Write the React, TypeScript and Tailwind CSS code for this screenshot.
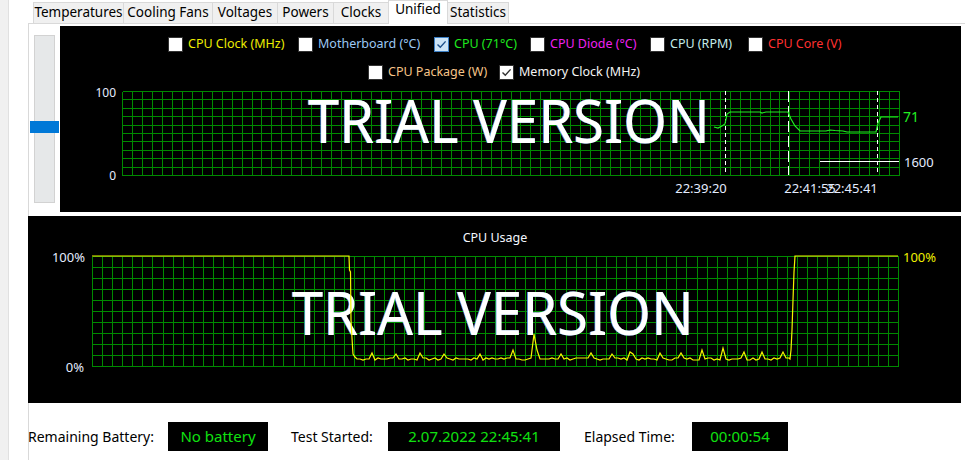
import React from "react";

type CbState = "off" | "blue" | "gray";

function CheckBox({ state }: { state: CbState }) {
  if (state === "blue") {
    return (
      <span className="w-[15px] h-[15px] shrink-0 border border-[#3c7fc4] bg-[#cce4f7] flex items-center justify-center">
        <svg width="11" height="11" viewBox="0 0 11 11">
          <path d="M1.5 5.5 L4.3 8.3 L9.6 2.4" fill="none" stroke="#1d4f8a" strokeWidth="1.4" />
        </svg>
      </span>
    );
  }
  if (state === "gray") {
    return (
      <span className="w-[15px] h-[15px] shrink-0 border border-[#333333] bg-white flex items-center justify-center">
        <svg width="11" height="11" viewBox="0 0 11 11">
          <path d="M1.5 5.5 L4.3 8.3 L9.6 2.4" fill="none" stroke="#333333" strokeWidth="1.4" />
        </svg>
      </span>
    );
  }
  return <span className="w-[15px] h-[15px] shrink-0 border border-[#333333] bg-white" />;
}

const row1 = [
  { label: "CPU Clock (MHz)", color: "text-[#eded00]", w: "w-[130px]", state: "off" as CbState },
  { label: "Motherboard (°C)", color: "text-[#9cc8f4]", w: "w-[136px]", state: "off" as CbState },
  { label: "CPU (71°C)", color: "text-[#1ee81e]", w: "w-[96px]", state: "blue" as CbState },
  { label: "CPU Diode (°C)", color: "text-[#f020f0]", w: "w-[120px]", state: "off" as CbState },
  { label: "CPU (RPM)", color: "text-[#c6ecea]", w: "w-[98px]", state: "off" as CbState },
  { label: "CPU Core (V)", color: "text-[#ff3030]", w: "w-[92px]", state: "off" as CbState },
];
const row2 = [
  { label: "CPU Package (W)", color: "text-[#f6c488]", w: "w-[131px]", state: "off" as CbState },
  { label: "Memory Clock (MHz)", color: "text-[#f4f4f4]", w: "w-[142px]", state: "gray" as CbState },
];

function Legend({ items, pl }: { items: typeof row1; pl: string }) {
  return (
    <div className={`flex h-[15px] items-center ${pl}`}>
      {items.map((it) => (
        <div key={it.label} className={`flex items-center gap-[5px] ${it.w}`}>
          <CheckBox state={it.state} />
          <span className={`text-[12.5px] leading-none whitespace-nowrap ${it.color}`}>{it.label}</span>
        </div>
      ))}
    </div>
  );
}

function Grid({ x0, x1, y0, y1, cols, rows }: { x0: number; x1: number; y0: number; y1: number; cols: number; rows: number }) {
  const v = Array.from({ length: cols + 1 }, (_, i) => Math.round(x0 + (i * (x1 - x0)) / cols) + 0.5);
  const h = Array.from({ length: rows + 1 }, (_, j) => Math.round(y0 + (j * (y1 - y0)) / rows) + 0.5);
  return (
    <g stroke="#008a00" strokeWidth="1" shapeRendering="crispEdges">
      {v.map((x) => (
        <line key={"v" + x} x1={x} y1={h[0]} x2={x} y2={h[h.length - 1]} />
      ))}
      {h.map((y) => (
        <line key={"h" + y} x1={v[0]} y1={y} x2={v[v.length - 1]} y2={y} />
      ))}
    </g>
  );
}

const FF = "'Noto Sans', 'DejaVu Sans', sans-serif";

function Watermark({ x, y }: { x: number; y: number }) {
  return (
    <g fontFamily={FF} fontSize="60" fontWeight={370}>
      <text x={x - 0.8} y={y} fill="#5aa0ff" opacity="0.85" textLength={402} lengthAdjust="spacingAndGlyphs">
        TRIAL VERSION
      </text>
      <text x={x} y={y} fill="#ffffff" textLength={402} lengthAdjust="spacingAndGlyphs">
        TRIAL VERSION
      </text>
    </g>
  );
}

function TopPlot() {
  const ox = 60;
  const oy = 84;
  const pts: [number, number][] = [
    [714, 127], [718, 128], [722, 126], [725, 124], [727, 114], [730, 112], [760, 112], [762, 113],
    [766, 112], [788, 112], [791, 119], [795, 126], [800, 131], [812, 131], [826, 131], [830, 130],
    [835, 130.5], [843, 131], [847, 132], [860, 132], [876, 132], [878, 123], [881, 117], [898, 117],
  ];
  const d = pts.map((p, i) => `${i ? "L" : "M"}${p[0] - ox} ${p[1] - oy}`).join(" ");
  return (
    <svg width="901" height="128" viewBox="0 0 901 128" className="block mt-[4px]">
      <Grid x0={62} x1={839} y0={7} y1={91} cols={78} rows={10} />
      <Watermark x={248} y={59} />
      <g stroke="#ffffff" strokeWidth="1" shapeRendering="crispEdges">
        <line x1={665.5} y1={7} x2={665.5} y2={91} strokeDasharray="4 3" />
        <line x1={728.5} y1={7} x2={728.5} y2={91} strokeDasharray="11 4" />
        <line x1={817.5} y1={7} x2={817.5} y2={91} strokeDasharray="4 3" />
        <line x1={760} y1={77.5} x2={839} y2={77.5} />
      </g>
      <path d={d} fill="none" stroke="#22ee22" strokeWidth="1.2" />
      <g fontFamily={FF} fill="#e4ecff">
        <text x={56} y={12.5} fontSize="12" textAnchor="end">100</text>
        <text x={56} y={95.5} fontSize="12" textAnchor="end">0</text>
        <text x={641} y={108.5} fontSize="13" textAnchor="middle">22:39:20</text>
        <text x={750} y={108.5} fontSize="13" textAnchor="middle">22:41:55</text>
        <text x={792} y={108.5} fontSize="13" textAnchor="middle">22:45:41</text>
        <text x={844} y={82.5} fontSize="13">1600</text>
      </g>
      <text x={843} y={38} fontSize="14" fontFamily={FF} fill="#22ee22">71</text>
    </svg>
  );
}

function BottomPlot() {
  const ox = 28;
  const oy = 216;
  const spikes: Record<number, number> = {
    372: 353, 396: 354, 420: 353, 444: 354, 480: 354, 513: 350, 535: 334, 538: 350, 560: 354,
    590: 353, 611: 354, 630: 352, 633: 354, 659: 353, 681: 353, 701: 350, 723: 348, 743: 352,
    763: 352, 783: 352,
  };
  let seed = 7;
  const rnd = () => {
    seed = (seed * 9301 + 49297) % 233280;
    return seed / 233280;
  };
  const pts: [number, number][] = [
    [92, 256], [349, 256], [349.5, 270], [350.5, 272], [351, 320], [352, 338], [353, 354], [355, 357],
  ];
  for (let x = 357; x <= 789; x += 3) {
    let y = 360 - Math.round(rnd() * 2.5);
    for (const k of Object.keys(spikes)) {
      const kx = Number(k);
      if (Math.abs(kx - x) <= 1) y = spikes[kx];
    }
    pts.push([x, y]);
  }
  pts.push([790, 359], [791, 350], [792, 330], [793, 300], [794, 272], [795, 256], [898, 256]);
  const d = pts.map((p, i) => `${i ? "L" : "M"}${p[0] - ox} ${p[1] - oy}`).join(" ");
  return (
    <svg width="933" height="187" viewBox="0 0 933 187" className="block">
      <text x={467} y={26} fontSize="12.5" fontFamily={FF} fill="#f4f8ff" textAnchor="middle">
        CPU Usage
      </text>
      <Grid x0={64} x1={870} y0={40} y1={150} cols={80} rows={10} />
      <Watermark x={264} y={119} />
      <path d={d} fill="none" stroke="#f6f600" strokeWidth="1.2" />
      <g fontFamily={FF} fontSize="13">
        <text x={57} y={45.5} textAnchor="end" fill="#e4ecff">100%</text>
        <text x={56} y={155.5} textAnchor="end" fill="#e4ecff">0%</text>
        <text x={875} y={45.5} fill="#f0f000">100%</text>
      </g>
    </svg>
  );
}

const tabsBefore = [
  { label: "Temperatures", w: "w-[90px]" },
  { label: "Cooling Fans", w: "w-[89px]" },
  { label: "Voltages", w: "w-[65px]" },
  { label: "Powers", w: "w-[56px]" },
  { label: "Clocks", w: "w-[55px]" },
];

export default function App() {
  return (
    <div className="w-[965px] h-[460px] bg-white flex overflow-hidden font-['Noto_Sans',sans-serif] text-black">
      <div className="w-[9px] h-full shrink-0 bg-[#f0f0f0] border-r border-[#e0e0e0]" />
      <div className="w-[19px] h-full shrink-0 bg-white" />
      <div className="flex-1 flex flex-col min-w-0">
        <div className="h-[23px] flex items-end pl-[5px] shrink-0">
          {tabsBefore.map((t) => (
            <div
              key={t.label}
              className={`h-[21px] ${t.w} bg-[#f0f0f0] border-t border-l border-[#d9d9d9] flex items-center justify-center text-[13.5px] leading-none pb-[1px] whitespace-nowrap`}
            >
              {t.label}
            </div>
          ))}
          <div className="relative z-10 h-[24px] w-[60px] mb-[-1px] bg-white border-t border-l border-r border-[#d9d9d9] flex items-center justify-center text-[13.5px] leading-none pb-[5px]">
            Unified
          </div>
          <div className="h-[21px] w-[61px] bg-[#f0f0f0] border-t border-r border-[#d9d9d9] flex items-center justify-center text-[13.5px] leading-none pb-[1px]">
            Statistics
          </div>
        </div>
        <div className="flex-1 border-t border-l border-[#d9d9d9] flex flex-col">
          <div className="flex pt-[2px]">
            <div className="w-[31px] shrink-0 pt-[9px]">
              <div className="relative ml-[5px] w-[21px] h-[168px] bg-[#e6e8e9] border border-[#d2d2d2]">
                <div className="absolute left-[-5px] top-[85px] w-[29px] h-[12px] bg-[#0078d7]" />
              </div>
            </div>
            <div className="w-[901px] h-[186px] bg-black flex flex-col pt-[11px]">
              <Legend items={row1} pl="pl-[108px]" />
              <div className="h-[13px]" />
              <Legend items={row2} pl="pl-[308px]" />
              <TopPlot />
            </div>
          </div>
          <div className="mt-[4px] ml-[-1px] w-[933px] h-[187px] bg-black">
            <BottomPlot />
          </div>
          <div className="flex items-center mt-[19px] ml-[-1px] h-[29px] text-[14px]">
            <span className="w-[140px] whitespace-nowrap">Remaining Battery:</span>
            <span className="w-[100px] h-[29px] bg-black text-[#10e010] flex items-center justify-center text-[15px]">No battery</span>
            <span className="ml-[23px] w-[97px] whitespace-nowrap">Test Started:</span>
            <span className="w-[172px] h-[29px] bg-black text-[#10e010] flex items-center justify-center text-[15px]">2.07.2022 22:45:41</span>
            <span className="ml-[24px] w-[108px] whitespace-nowrap">Elapsed Time:</span>
            <span className="w-[96px] h-[29px] bg-black text-[#10e010] flex items-center justify-center text-[15px]">00:00:54</span>
          </div>
        </div>
      </div>
    </div>
  );
}
